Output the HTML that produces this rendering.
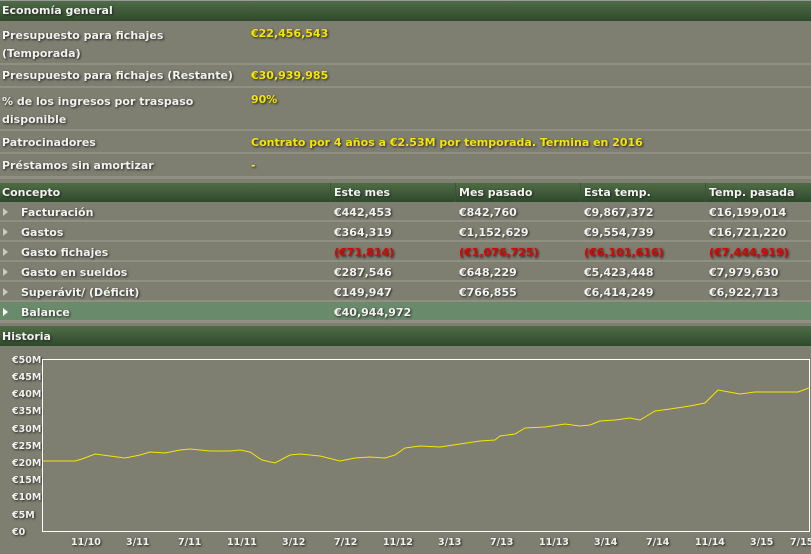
<!DOCTYPE html>
<html><head><meta charset="utf-8"><style>
*{margin:0;padding:0;box-sizing:border-box}
body{width:811px;height:554px;overflow:hidden;background:#7e7e71;font-family:"DejaVu Sans","Liberation Sans",sans-serif;font-weight:bold;font-size:11px;color:#f2f2ee;position:relative}
.a{position:absolute;white-space:nowrap;text-shadow:1px 1px 2px #222}
.hd{position:absolute;left:0;width:811px;background:linear-gradient(#4f6c47,#2f4a2b);}
.row{position:absolute;left:0;width:811px;border-bottom:2px solid #8f8f84}
.y{color:#f5e600}
.r{color:#e00000}
.tri{position:absolute;left:3px;width:0;height:0;border-top:4px solid transparent;border-bottom:4px solid transparent;border-left:5px solid #c8c8c0}
.vb{position:absolute;width:1px;background:#3a5535}
.yl{position:absolute;left:12px;font-size:9.5px;white-space:nowrap;text-shadow:1px 1px 2px #222}
</style></head><body>
<div class="hd" style="top:0;height:21px;border-top:1px solid #999"></div>
<div class="a" style="left:2px;top:4px">Economía general</div>

<div class="row" style="top:21px;height:44px"></div>
<div class="a" style="left:2px;top:27px;line-height:18px">Presupuesto para fichajes<br>(Temporada)</div>
<div class="a y" style="left:251px;top:27px">€22,456,543</div>
<div class="row" style="top:65px;height:23px"></div>
<div class="a" style="left:2px;top:69px">Presupuesto para fichajes (Restante)</div>
<div class="a y" style="left:251px;top:69px">€30,939,985</div>
<div class="row" style="top:88px;height:43px"></div>
<div class="a" style="left:2px;top:93px;line-height:18px">% de los ingresos por traspaso<br>disponible</div>
<div class="a y" style="left:251px;top:93px">90%</div>
<div class="row" style="top:131px;height:23px"></div>
<div class="a" style="left:2px;top:136px">Patrocinadores</div>
<div class="a y" style="left:251px;top:136px">Contrato por 4 años a €2.53M por temporada. Termina en 2016</div>
<div class="row" style="top:154px;height:25px;border-bottom:3px solid #8f8f84"></div>
<div class="a" style="left:2px;top:159px">Préstamos sin amortizar</div>
<div class="a y" style="left:251px;top:159px">-</div>

<div class="hd" style="top:183px;height:19px"></div>
<div class="vb" style="left:330px;top:183px;height:19px"></div>
<div class="vb" style="left:455px;top:183px;height:19px"></div>
<div class="vb" style="left:580px;top:183px;height:19px"></div>
<div class="vb" style="left:705px;top:183px;height:19px"></div>
<div class="a" style="left:2px;top:186px">Concepto</div>
<div class="a" style="left:334px;top:186px">Este mes</div>
<div class="a" style="left:459px;top:186px">Mes pasado</div>
<div class="a" style="left:584px;top:186px">Esta temp.</div>
<div class="a" style="left:709px;top:186px">Temp. pasada</div>

<div class="row" style="top:202px;height:20px"></div><div class="tri" style="top:208px"></div>
<div class="a" style="left:21px;top:206px">Facturación</div><div class="a" style="left:334px;top:206px">€442,453</div><div class="a" style="left:459px;top:206px">€842,760</div><div class="a" style="left:584px;top:206px">€9,867,372</div><div class="a" style="left:709px;top:206px">€16,199,014</div>
<div class="row" style="top:222px;height:20px"></div><div class="tri" style="top:228px"></div>
<div class="a" style="left:21px;top:226px">Gastos</div><div class="a" style="left:334px;top:226px">€364,319</div><div class="a" style="left:459px;top:226px">€1,152,629</div><div class="a" style="left:584px;top:226px">€9,554,739</div><div class="a" style="left:709px;top:226px">€16,721,220</div>
<div class="row" style="top:242px;height:20px"></div><div class="tri" style="top:248px"></div>
<div class="a" style="left:21px;top:246px">Gasto fichajes</div><div class="a r" style="left:334px;top:246px">(€71,814)</div><div class="a r" style="left:459px;top:246px">(€1,076,725)</div><div class="a r" style="left:584px;top:246px">(€6,101,616)</div><div class="a r" style="left:709px;top:246px">(€7,444,919)</div>
<div class="row" style="top:262px;height:20px"></div><div class="tri" style="top:268px"></div>
<div class="a" style="left:21px;top:266px">Gasto en sueldos</div><div class="a" style="left:334px;top:266px">€287,546</div><div class="a" style="left:459px;top:266px">€648,229</div><div class="a" style="left:584px;top:266px">€5,423,448</div><div class="a" style="left:709px;top:266px">€7,979,630</div>
<div class="row" style="top:282px;height:20px"></div><div class="tri" style="top:288px"></div>
<div class="a" style="left:21px;top:286px">Superávit/ (Déficit)</div><div class="a" style="left:334px;top:286px">€149,947</div><div class="a" style="left:459px;top:286px">€766,855</div><div class="a" style="left:584px;top:286px">€6,414,249</div><div class="a" style="left:709px;top:286px">€6,922,713</div>
<div class="row" style="top:302px;height:21px;background:#6a8a6c;border-bottom:3px solid #8f8f84"></div><div class="tri" style="top:308px;border-left-color:#fff"></div>
<div class="a" style="left:21px;top:306px">Balance</div><div class="a" style="left:334px;top:306px">€40,944,972</div>

<div class="hd" style="top:326px;height:20px"></div>
<div class="a" style="left:2px;top:330px">Historia</div>

<div class="yl" style="top:355px">€50M</div>
<div class="yl" style="top:372px">€45M</div>
<div class="yl" style="top:389px">€40M</div>
<div class="yl" style="top:406px">€35M</div>
<div class="yl" style="top:424px">€30M</div>
<div class="yl" style="top:441px">€25M</div>
<div class="yl" style="top:458px">€20M</div>
<div class="yl" style="top:475px">€15M</div>
<div class="yl" style="top:492px">€10M</div>
<div class="yl" style="top:510px">€5M</div>
<div class="yl" style="top:527px">€0</div>

<svg style="position:absolute;left:0;top:0" width="811" height="554">
<rect x="42.5" y="359.5" width="767" height="172" fill="none" stroke="#fff" stroke-width="1"/>
<polyline fill="none" stroke="#f5e600" stroke-width="1" points="43,461 75,461 82,459 95,454 110,456 125,458 140,455 150,452 165,453 180,450 190,449 200,450 210,451 230,451 240,450 250,452 262,460 275,463 290,455 300,454 320,456 340,461 355,458 370,457 385,458 395,455 405,448 420,446 440,447 460,444 480,441 495,440 500,436 515,434 525,428 545,427 565,424 580,426 590,425 600,421 615,420 630,418 640,420 655,411 670,409 690,406 705,403 718,390 740,394 755,392 775,392 798,392 809,388"/>
</svg>
<div class="a" style="left:71px;top:537px;font-size:9.5px">11/10</div>
<div class="a" style="left:126px;top:537px;font-size:9.5px">3/11</div>
<div class="a" style="left:178px;top:537px;font-size:9.5px">7/11</div>
<div class="a" style="left:227px;top:537px;font-size:9.5px">11/11</div>
<div class="a" style="left:282px;top:537px;font-size:9.5px">3/12</div>
<div class="a" style="left:334px;top:537px;font-size:9.5px">7/12</div>
<div class="a" style="left:383px;top:537px;font-size:9.5px">11/12</div>
<div class="a" style="left:438px;top:537px;font-size:9.5px">3/13</div>
<div class="a" style="left:490px;top:537px;font-size:9.5px">7/13</div>
<div class="a" style="left:539px;top:537px;font-size:9.5px">11/13</div>
<div class="a" style="left:594px;top:537px;font-size:9.5px">3/14</div>
<div class="a" style="left:646px;top:537px;font-size:9.5px">7/14</div>
<div class="a" style="left:695px;top:537px;font-size:9.5px">11/14</div>
<div class="a" style="left:750px;top:537px;font-size:9.5px">3/15</div>
<div class="a" style="left:790px;top:537px;font-size:9.5px">7/15</div>
</body></html>
